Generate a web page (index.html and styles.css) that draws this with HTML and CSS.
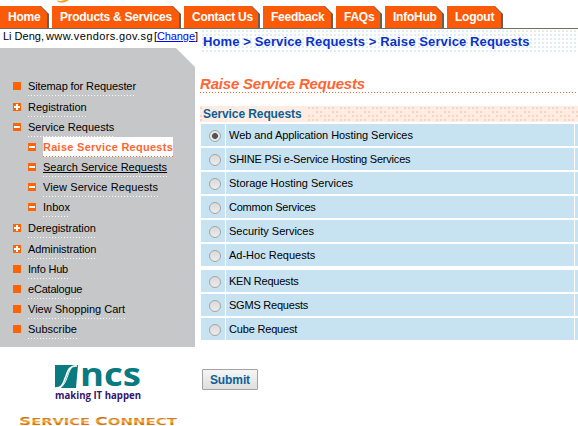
FILE: index.html
```html
<!DOCTYPE html>
<html lang="en">
<head>
<meta charset="utf-8">
<title>Raise Service Requests</title>
<link rel="stylesheet" href="styles.css">
</head>
<body>
<header class="top">
  <svg class="swirl" width="20" height="4" viewBox="0 0 20 4"><path d="M2 0Q5 2 9 0H14Q9 4 3 2Z" fill="#f2a629"/></svg>
  <nav class="tabs">
    <a class="tab t-home"><span>Home</span></a>
    <a class="tab t-products"><span>Products &amp; Services</span></a>
    <a class="tab t-contact"><span>Contact Us</span></a>
    <a class="tab t-feedback"><span>Feedback</span></a>
    <a class="tab t-faqs"><span>FAQs</span></a>
    <a class="tab t-info"><span>InfoHub</span></a>
    <a class="tab t-logout"><span>Logout</span></a>
  </nav>
</header>
<div class="columns">
  <aside class="left">
    <div class="user"><span class="uname">Li Deng,</span> <span class="domain">www.vendors.gov.sg</span><span class="change">[<a>Change</a>]</span></div>
    <ul class="menu">
      <li class="square"><a class="m1">Sitemap for Requester</a></li>
      <li class="plus"><a class="m2">Registration</a></li>
      <li class="minus"><a class="m3">Service Requests</a></li>
      <li class="minus sub"><a class="m4 current">Raise Service Requests</a></li>
      <li class="minus sub"><a class="m5 hover">Search Service Requests</a></li>
      <li class="minus sub"><a class="m6">View Service Requests</a></li>
      <li class="minus sub gap"><a class="m7">Inbox</a></li>
      <li class="plus gap"><a class="m8">Deregistration</a></li>
      <li class="plus"><a class="m9">Administration</a></li>
      <li class="square"><a class="m10">Info Hub</a></li>
      <li class="square"><a class="m11">eCatalogue</a></li>
      <li class="square"><a class="m12">View Shopping Cart</a></li>
      <li class="square"><a class="m13">Subscribe</a></li>
    </ul>
    <svg class="logos" width="195" height="79" viewBox="0 347 195 79">
      <defs><linearGradient id="gold" x1="0" y1="0" x2="0" y2="1"><stop offset="0.15" stop-color="#b9590d"/><stop offset="0.5" stop-color="#f5b04d"/><stop offset="0.65" stop-color="#e5841a"/><stop offset="0.85" stop-color="#c9640d"/></linearGradient></defs>
      <path d="M55 365H78L76 388H55Z" fill="#087a80"/>
      <path d="M54 388C63 389 63 383 66 376C68 369 71 365 77 366" fill="none" stroke="#fff" stroke-width="1.6"/>
      <path d="M60 388C68 383 67 371 73 366" fill="none" stroke="#fff" stroke-width="1"/>
      <text class="ncs" x="80" y="386" textLength="61" lengthAdjust="spacingAndGlyphs">ncs</text>
      <text class="motto" x="55" y="399" textLength="86" lengthAdjust="spacingAndGlyphs">making IT happen</text>
      <g class="connect" fill="url(#gold)">
        <text x="19" y="424.6" textLength="71" lengthAdjust="spacingAndGlyphs"><tspan class="cap">S</tspan>ERVICE</text>
        <text x="95" y="424.6" textLength="82" lengthAdjust="spacingAndGlyphs"><tspan class="cap">C</tspan>ONNECT</text>
      </g>
    </svg>
  </aside>
  <main>
    <div class="crumbs"><span>Home &gt; Service Requests &gt; Raise Service Requests</span></div>
    <h1><span>Raise Service Requests</span></h1>
    <h2><span>Service Requests</span></h2>
    <div class="rows">
      <label class="row"><span class="pick"><i class="radio on"></i></span><span class="name r1">Web and Application Hosting Services</span><span class="rest"></span></label>
      <label class="row"><span class="pick"><i class="radio"></i></span><span class="name r2">SHINE PSi e-Service Hosting Services</span><span class="rest"></span></label>
      <label class="row"><span class="pick"><i class="radio"></i></span><span class="name r3">Storage Hosting Services</span><span class="rest"></span></label>
      <label class="row"><span class="pick"><i class="radio"></i></span><span class="name r4">Common Services</span><span class="rest"></span></label>
      <label class="row"><span class="pick"><i class="radio"></i></span><span class="name r5">Security Services</span><span class="rest"></span></label>
      <label class="row"><span class="pick"><i class="radio"></i></span><span class="name r6">Ad-Hoc Requests</span><span class="rest"></span></label>
      <label class="row second"><span class="pick"><i class="radio"></i></span><span class="name r7">KEN Requests</span><span class="rest"></span></label>
      <label class="row"><span class="pick"><i class="radio"></i></span><span class="name r8">SGMS Requests</span><span class="rest"></span></label>
      <label class="row"><span class="pick"><i class="radio"></i></span><span class="name r9">Cube Request</span><span class="rest"></span></label>
    </div>
    <button>Submit</button>
  </main>
</div>
</body>
</html>
```

FILE: styles.css
```css
* { box-sizing: border-box; }
body { margin: 0; width: 578px; height: 426px; overflow: hidden; background: #fff; font: 11px "Liberation Sans", Arial, sans-serif; color: #000; }
.top { position: relative; height: 29px; padding-top: 6px; border-bottom: 1px solid #776b5c; }
.swirl { position: absolute; left: 55px; top: 0; }
.tabs { display: flex; }
.tab { height: 22px; margin-right: 3px; background: #665f58; clip-path: polygon(0 0, calc(100% - 8px) 0, 100% 8px, 100% 100%, 0 100%); flex: none; }
.tab span { display: block; height: 22px; margin-right: 2px; padding-left: 8px; background: #fb5a08; color: #fff; font-weight: bold; font-size: 12px; letter-spacing: -0.25px; line-height: 22px; white-space: nowrap; clip-path: polygon(0 0, calc(100% - 7px) 0, 100% 7px, 100% 100%, 0 100%); }
.t-home { width: 49px; }
.t-products { width: 129px; }
.t-contact { width: 76px; }
.t-feedback { width: 70px; }
.t-faqs { width: 46px; }
.t-info { width: 59px; }
.t-logout { width: 56px; }
.columns { display: flex; }
.left { width: 195px; flex: none; }
.user { height: 19px; padding-left: 3px; line-height: 15px; white-space: nowrap; display: flex; gap: 4px; }
.uname { width: 39px; }
.domain { width: 104px; letter-spacing: 0.38px; }
.change { letter-spacing: -0.1px; }
.change a { color: #00f; text-decoration: underline; }
.menu { list-style: none; margin: 0; height: 299px; padding: 29px 0 0 13px; background: #c6c7c9; clip-path: polygon(0 0, 176px 0, 195px 19px, 195px 100%, 0 100%); }
.menu li { height: 20px; display: flex; align-items: flex-start; }
.menu li:first-child { height: 21px; }
.menu .gap { height: 21px; }
.menu li::before { content: ""; width: 8px; height: 8px; margin: 5px 7px 0 0; background: #ff6400; flex: none; }
.plus::before { background: linear-gradient(#fff, #fff) 50% 50% / 6px 2px no-repeat, linear-gradient(#fff, #fff) 50% 50% / 2px 6px no-repeat, #ff6400 !important; }
.minus::before { background: linear-gradient(#fff, #fff) 50% 50% / 6px 2px no-repeat, #ff6400 !important; }
.menu .sub { padding-left: 15px; }
.menu a { height: 19px; line-height: 19px; white-space: nowrap; background: repeating-linear-gradient(90deg, #fff 0 1px, transparent 1px 3px) 0 100% / 100% 1px no-repeat; }
.menu .current { height: 20px; margin-top: -1px; line-height: 21px; letter-spacing: 0.27px; color: #ff6633; font-weight: bold; background: repeating-linear-gradient(90deg, #ff6633 0 1px, transparent 1px 3px) 0 100% / 100% 1px no-repeat, #fff; }
.menu .hover { text-decoration: underline; }
.m1, .m9 { letter-spacing: -0.1px; }
.m6 { letter-spacing: 0.1px; }
.m8 { letter-spacing: -0.05px; }
.m10 { letter-spacing: -0.2px; }
.m11 { letter-spacing: -0.2px; }
.logos { display: block; }
.ncs { font: bold 32px "Open Sans", sans-serif; fill: #087a80; }
.motto { font: bold 10.5px "Open Sans", sans-serif; fill: #35146b; }
.connect { font: bold 9.5px "DejaVu Sans", sans-serif; }
.cap { font-size: 11px; }
main { flex: 1; min-width: 0; padding-left: 5px; }
.crumbs { height: 23px; padding-left: 3px; background: conic-gradient(from 90deg at 2px 2px, transparent 270deg, #e0edf3 0) 0 1px / 4px 4px; color: #0a32c8; font-size: 13px; font-weight: bold; letter-spacing: 0.12px; line-height: 25px; white-space: nowrap; }
h1 { height: 21px; margin: 20px 0 0; font-size: 15px; letter-spacing: -0.2px; line-height: 24px; font-style: italic; color: #ff6633; white-space: nowrap; background: repeating-linear-gradient(90deg, #ff6633 0 1px, transparent 1px 3px) 0 100% / 100% 1px no-repeat; }
h2 { height: 16px; margin: 13px 0 2px; font-size: 12px; letter-spacing: -0.1px; line-height: 16px; color: #0c5f96; white-space: nowrap; background: #ffede4 url("data:image/svg+xml,%3Csvg xmlns='http://www.w3.org/2000/svg' width='16' height='16'%3E%3Cpath fill='%23f8d4c3' d='M4 1h2v2h-2zM8 1h2v2h-2zM12 1h2v2h-2zM0 5h2v2h-2zM0 9h2v2h-2zM4 9h2v2h-2zM8 9h2v2h-2zM4 13h2v2h-2zM8 13h2v2h-2zM12 13h2v2h-2z'/%3E%3Cpath fill='%23fbcfc8' d='M12 5h2v2h-2z'/%3E%3C/svg%3E") -8px 0; padding-left: 2px; }
h2 span { display: inline-block; height: 16px; width: 104px; padding-left: 1px; background: #ffede4; }
.rows { padding-left: 1px; display: flex; flex-direction: column; gap: 2px; }
.row { display: grid; grid-template-columns: 24px 348px 1fr; gap: 1px; height: 22px; }
.row > span { background: #c7e2f0; }
.second { margin-top: 2px; }
.pick { padding: 6px 0 0 8px; }
.radio { display: block; width: 12px; height: 12px; border: 1px solid #a5a5a5; border-radius: 50%; background: linear-gradient(#dadada, #ececec); }
.on { background: radial-gradient(circle, #555 0 2.6px, #e8e8e8 3.3px); }
.name { padding-left: 3px; line-height: 22px; white-space: nowrap; }
.r1 { letter-spacing: -0.05px; }
.r2 { letter-spacing: -0.21px; }
.r4, .r7, .r8 { letter-spacing: -0.22px; }
.r9 { letter-spacing: -0.18px; }
button { display: block; width: 56px; height: 21px; margin: 29px 0 0 2px; padding: 0; border: 1px solid #a2a2a2; border-radius: 1px; background: linear-gradient(#f5f5f5, #dedede); font: bold 12px "Liberation Sans", Arial, sans-serif; letter-spacing: -0.1px; color: #0c5f96; }
```
